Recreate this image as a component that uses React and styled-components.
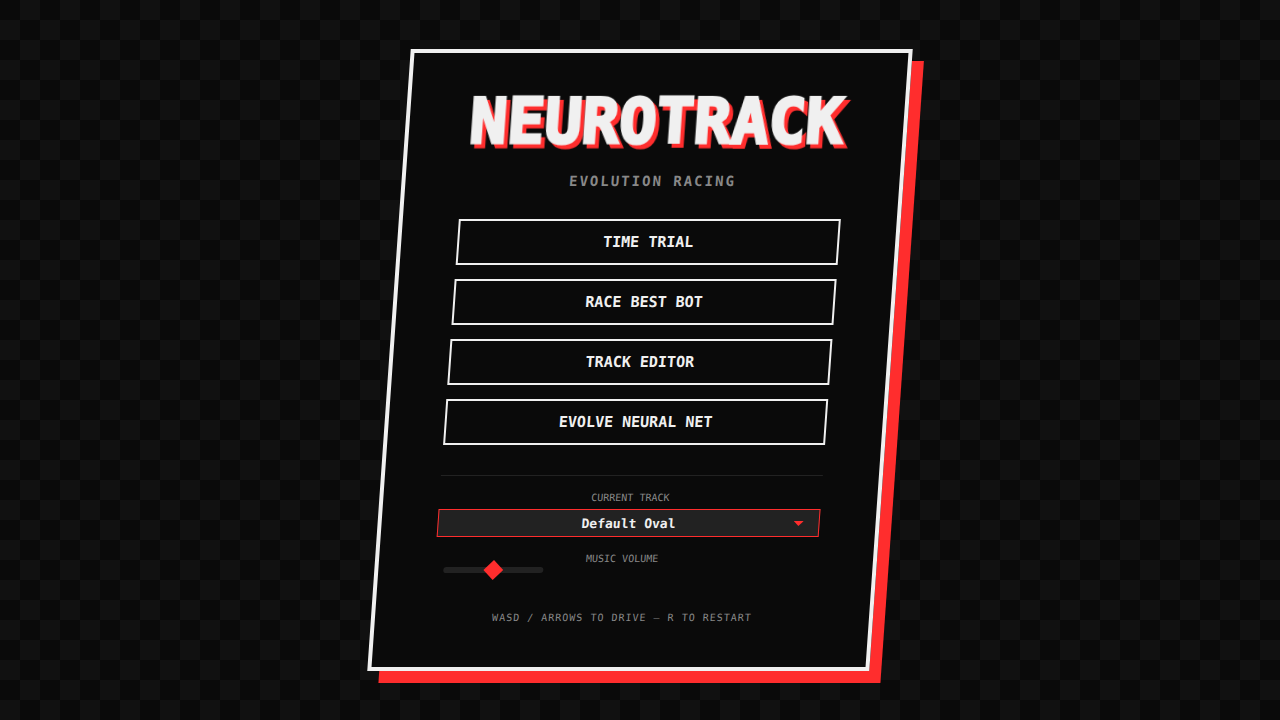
// src/App.jsx
import { useState } from 'react';
import styled, { createGlobalStyle, ThemeProvider } from 'styled-components';

const theme = {
  colors: {
    dark: '#0a0a0a',
    square: '#111111',
    gray: '#222222',
    muted: '#888888',
    light: '#f0f0f0',
    accent: '#ff2d2d',
  },
};

const GlobalStyle = createGlobalStyle`
  * {
    box-sizing: border-box;
    margin: 0;
  }

  body {
    background: ${theme.colors.dark};
    color: ${theme.colors.light};
    font-family: 'DejaVu Sans Mono', 'Liberation Mono', monospace;
  }
`;

const Screen = styled.main`
  min-height: 100vh;
  display: flex;
  align-items: center;
  justify-content: center;
  background: repeating-conic-gradient(
    ${({ theme }) => theme.colors.square} 0 25%,
    ${({ theme }) => theme.colors.dark} 0 50%
  ) 0 0 / 40px 40px;
`;

const Panel = styled.section`
  width: 100%;
  max-width: 502px;
  padding: 40px 56px;
  background: ${({ theme }) => theme.colors.dark};
  border: 4px solid ${({ theme }) => theme.colors.light};
  box-shadow: 12px 12px 0 ${({ theme }) => theme.colors.accent};
  text-align: center;
  transform: skewX(-4deg);
`;

const Title = styled.h1`
  font-size: 62px;
  font-weight: 700;
  line-height: 58px;
  white-space: nowrap;
  -webkit-text-stroke: 3px ${({ theme }) => theme.colors.light};
  filter: drop-shadow(4px 4px 0 ${({ theme }) => theme.colors.accent});
`;

const Subtitle = styled.p`
  margin-top: 20px;
  font-size: 14px;
  font-weight: 700;
  line-height: 20px;
  letter-spacing: 2px;
  color: ${({ theme }) => theme.colors.muted};
`;

const Menu = styled.nav`
  display: flex;
  flex-direction: column;
  gap: 14px;
  margin-top: 28px;
`;

const MenuButton = styled.button`
  height: 46px;
  background: transparent;
  border: 2px solid ${({ theme }) => theme.colors.light};
  color: ${({ theme }) => theme.colors.light};
  font-family: inherit;
  font-size: 15px;
  font-weight: 700;
  cursor: pointer;

  &:hover {
    background: ${({ theme }) => theme.colors.accent};
  }
`;

const Settings = styled.div`
  margin-top: 30px;
  padding-top: 15px;
  border-top: 1px solid ${({ theme }) => theme.colors.gray};
`;

const Label = styled.label`
  display: block;
  font-size: 10px;
  line-height: 14px;
  color: ${({ theme }) => theme.colors.muted};
`;

const SelectWrap = styled.div`
  position: relative;
  margin-top: 4px;

  svg {
    position: absolute;
    right: 16px;
    top: 12px;
    fill: ${({ theme }) => theme.colors.accent};
    pointer-events: none;
  }
`;

const TrackSelect = styled.select`
  display: block;
  width: 100%;
  height: 28px;
  padding: 0;
  appearance: none;
  background: ${({ theme }) => theme.colors.gray};
  border: 1px solid ${({ theme }) => theme.colors.accent};
  border-radius: 0;
  color: ${({ theme }) => theme.colors.light};
  font-family: inherit;
  font-size: 13px;
  font-weight: 700;
  text-align-last: center;
`;

const Volume = styled.div`
  margin-top: 15px;
  padding: 0 9px;

  label {
    margin-right: 8px;
  }
`;

const Slider = styled.input`
  display: block;
  width: 100px;
  height: 6px;
  margin-top: 1px;
  appearance: none;
  background: ${({ theme }) => theme.colors.gray};
  border-radius: 3px;
  outline: none;

  &::-webkit-slider-thumb {
    appearance: none;
    width: 14px;
    height: 14px;
    background: ${({ theme }) => theme.colors.accent};
    transform: rotate(45deg);
    cursor: pointer;
  }
`;

const Hint = styled.p`
  margin-top: 36px;
  font-size: 10px;
  line-height: 18px;
  letter-spacing: 1px;
  white-space: nowrap;
  color: ${({ theme }) => theme.colors.muted};
`;

const modes = ['TIME TRIAL', 'RACE BEST BOT', 'TRACK EDITOR', 'EVOLVE NEURAL NET'];

const App = () => {
  const [volume, setVolume] = useState(50);

  return (
    <ThemeProvider theme={theme}>
      <GlobalStyle />
      <Screen>
        <Panel>
          <Title>NEUROTRACK</Title>
          <Subtitle>EVOLUTION RACING</Subtitle>

          <Menu>
            {modes.map((mode) => (
              <MenuButton key={mode} type="button">{mode}</MenuButton>
            ))}
          </Menu>

          <Settings>
            <Label htmlFor="track">CURRENT TRACK</Label>
            <SelectWrap>
              <TrackSelect id="track" defaultValue="oval">
                <option value="oval">Default Oval</option>
              </TrackSelect>
              <svg width="10" height="5" viewBox="0 0 10 5" aria-hidden="true">
                <path d="M0 0h10L5 5z" />
              </svg>
            </SelectWrap>

            <Volume>
              <Label htmlFor="volume">MUSIC VOLUME</Label>
              <Slider
                id="volume"
                type="range"
                min="0"
                max="100"
                value={volume}
                onChange={(e) => setVolume(Number(e.target.value))}
              />
            </Volume>
          </Settings>

          <Hint>WASD / ARROWS TO DRIVE — R TO RESTART</Hint>
        </Panel>
      </Screen>
    </ThemeProvider>
  );
};

export default App;
